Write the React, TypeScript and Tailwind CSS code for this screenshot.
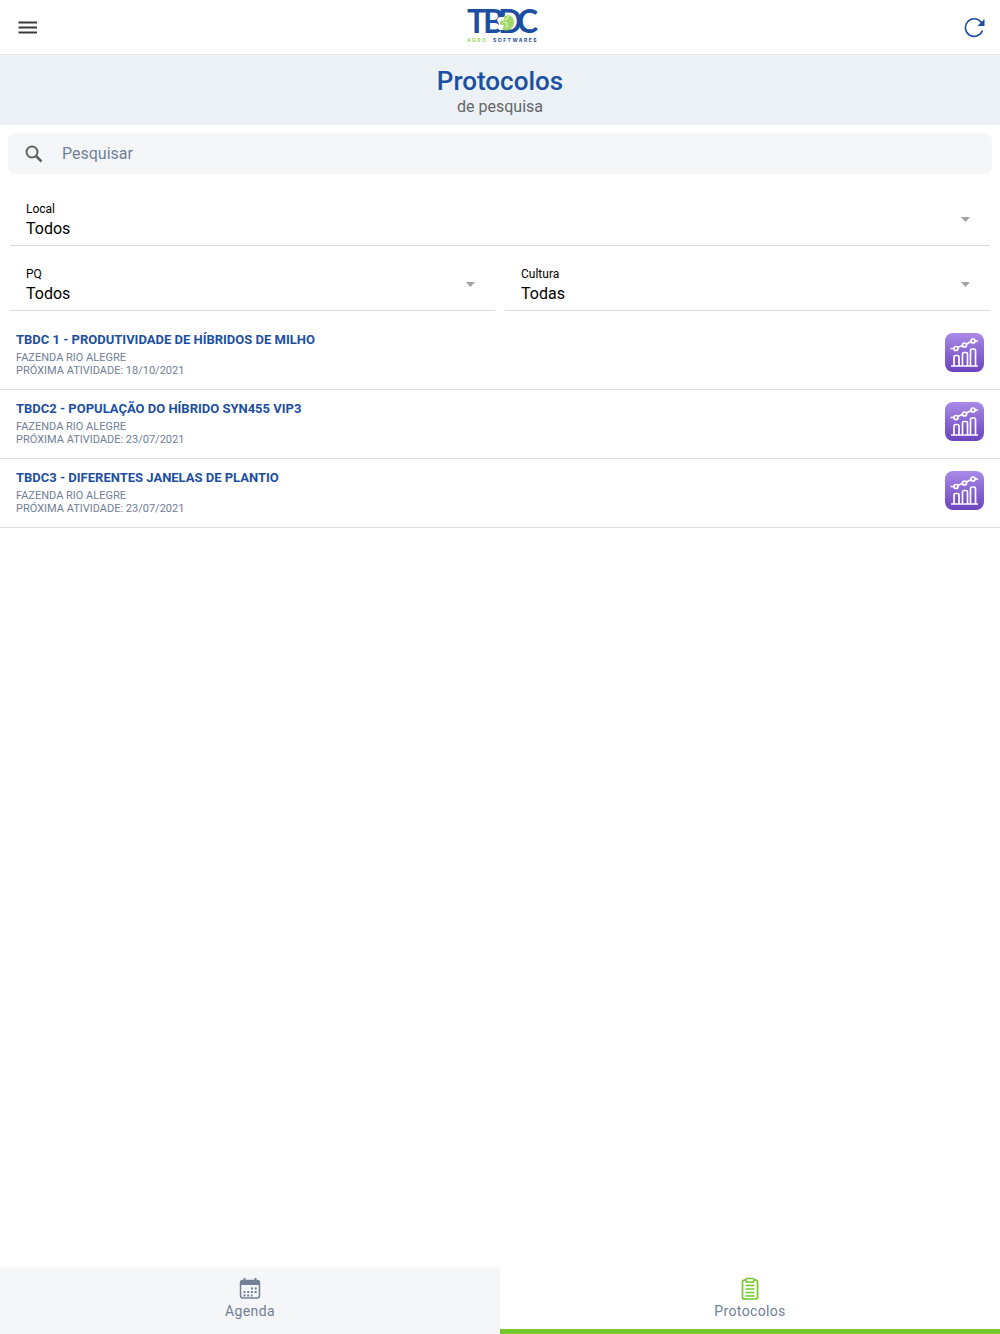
import React, { useState } from 'react';

interface Protocol {
  id: number;
  title: string;
  farm: string;
  nextActivity: string;
}

interface SelectFieldProps {
  id: string;
  label: string;
  options: string[];
}

const PROTOCOLS: Protocol[] = [
  { id: 1, title: 'TBDC 1 - PRODUTIVIDADE DE HÍBRIDOS DE MILHO', farm: 'FAZENDA RIO ALEGRE', nextActivity: '18/10/2021' },
  { id: 2, title: 'TBDC2 - POPULAÇÃO DO HÍBRIDO SYN455 VIP3', farm: 'FAZENDA RIO ALEGRE', nextActivity: '23/07/2021' },
  { id: 3, title: 'TBDC3 - DIFERENTES JANELAS DE PLANTIO', farm: 'FAZENDA RIO ALEGRE', nextActivity: '23/07/2021' },
];

const Logo: React.FC = () => (
  <svg className="h-11 w-[76px] overflow-visible" viewBox="0 0 76 44" role="img" aria-label="TBDC Agro Softwares">
    <text x="3 19 34 53" y="28" fill="#1c4fa1" fontFamily="Lato, sans-serif" fontWeight="700" fontSize="32">TBDC</text>
    {/* Globe inside the D */}
    <path d="M35 12h7l4 1 2 4v4l-3 3-4 1h-6l-2-3 2-3-2-4Z" fill="#fff" />
    <path d="M41 10c5-1 9 2 9 7s-4 8.500-8.500 8.500c-2 0-3-1-3-2l2-3-4-1-1-3 4-1 1-3-1-1Z" fill="#a1d867" />
    <path d="m41 10 3 1-1 3-2 1M39 17l4 1v3l-1 2" fill="none" stroke="#fff" strokeWidth="0.8" />
    <g fontFamily="Inter, sans-serif" fontWeight="700" fontSize="5" letterSpacing="1.500">
      <text x="3" y="37" fill="#9bd75e">AGRO</text>
      <text x="29" y="37" fill="#1c4fa1">SOFTWARES</text>
    </g>
  </svg>
);

const ChartIcon: React.FC = () => (
  <svg className="h-10 w-10" viewBox="0 0 40 40" fill="none" aria-hidden="true">
    <defs>
      <linearGradient id="chart-bg" x1="0" y1="0" x2="0" y2="1">
        <stop offset="0" stopColor="#a98ae8" />
        <stop offset="1" stopColor="#6c43bd" />
      </linearGradient>
    </defs>
    <rect x="1" y="1" width="39" height="39" rx="8" fill="url(#chart-bg)" />
    <g stroke="#fff" strokeWidth="1.700">
      <path d="M7 34h27M10 34V25q0-1.500 1.500-1.500h2q1.500 0 1.500 1.500v9M18.500 34V22q0-1.500 1.500-1.500h2q1.500 0 1.500 1.500v12M26.500 34V18.500q0-1.500 1.500-1.500h2q1.500 0 1.500 1.500V34" />
      <path d="M6.500 16.500h3.500M13.500 15.500l5-2M22.500 12l4.500-2.500M31 9h3" />
      <circle cx="12" cy="16.500" r="2" />
      <circle cx="20.500" cy="13" r="2" />
      <circle cx="29" cy="9" r="2" />
    </g>
  </svg>
);

const CalendarIcon: React.FC = () => (
  <svg className="h-6 w-6" viewBox="0 0 24 24" fill="none" aria-hidden="true">
    <rect x="2.500" y="3.500" width="19" height="17.500" rx="2.500" stroke="#718096" strokeWidth="1.500" />
    <path d="M2 8V6q0-3 3-3h14q3 0 3 3v2Z" fill="#718096" />
    <path d="M6.500 1V5M17.500 1V5" stroke="#718096" strokeWidth="2" />
    <path d="M13 11.500h6M5.500 15h13.500M5.500 18.500h9" stroke="#718096" strokeWidth="2" strokeDasharray="2 1.700" />
  </svg>
);

const ClipboardIcon: React.FC = () => (
  <svg className="h-6 w-6" viewBox="0 0 24 24" fill="none" stroke="#76c82e" strokeWidth="1.700" aria-hidden="true">
    <path d="M8 3H6.500Q4.500 3 4.500 5v15q0 2 2 2h11q2 0 2-2V5q0-2-2-2H16" />
    <path d="M8 4V2.500q0-1 1-1h6q1 0 1 1V4q0 1-1 1H9q-1 0-1-1Z" />
    <path d="M7.500 8.500h9M7.500 12h9M7.500 15.500h9M7.500 19h9" />
  </svg>
);

const SelectField: React.FC<SelectFieldProps> = ({ id, label, options }) => (
  <div className="flex min-w-0 flex-1 items-center border-b border-[#dcdcdc] pr-5 pl-4">
    <div className="flex flex-1 flex-col pt-[9px] pb-1">
      <label htmlFor={id} className="text-xs leading-4">{label}</label>
      <select id={id} className="h-6 w-full appearance-none bg-transparent text-base leading-6 outline-none">
        {options.map(option => <option key={option}>{option}</option>)}
      </select>
    </div>
    <svg className="pointer-events-none h-[6px] w-[9px]" viewBox="0 0 9 6" aria-hidden="true">
      <path d="M0 1h9L4.500 6Z" fill="#a3a3a3" />
    </svg>
  </div>
);

const App: React.FC = () => {
  const [search, setSearch] = useState('');
  const visible = PROTOCOLS.filter(p => p.title.toLowerCase().includes(search.toLowerCase()));

  return (
    <div className="flex min-h-screen flex-col bg-white font-['Roboto',sans-serif] text-black">
      {/* Top bar */}
      <header className="flex h-[55px] items-center justify-between border-b border-[#e4e8eb] pr-3 pl-4">
        <button type="button" aria-label="Menu" className="flex w-6 justify-center">
          <svg className="h-6 w-6" viewBox="0 0 24 24" aria-hidden="true">
            <path d="M2.500 7.500h18.500M2.500 12.500h18.500M2.500 17.500h18.500" stroke="#3c3a3c" strokeWidth="2" />
          </svg>
        </button>
        <Logo />
        <button type="button" aria-label="Atualizar" className="flex w-6 justify-center">
          <svg className="h-6 w-6" viewBox="0 0 24 24" fill="none" aria-hidden="true">
            <path d="M18.500 15.500A8.800 8.800 0 1 1 17 7l1.500 2" stroke="#1c4fa1" strokeWidth="1.600" />
            <path d="M20.500 4v7h-7Z" fill="#1c4fa1" />
          </svg>
        </button>
      </header>

      {/* Page title */}
      <div className="flex flex-col items-center bg-[#ecf1f6] pt-[10px] pb-2">
        <h1 className="text-[26px] leading-8 font-medium text-[#1c4fa1]">Protocolos</h1>
        <p className="text-base leading-5 text-[#666666]">de pesquisa</p>
      </div>

      <main className="flex-1">
        <label className="m-2 flex h-[41px] items-center gap-[18px] rounded-lg bg-[#f5f6f8] px-4">
          <svg className="h-5 w-5 shrink-0" viewBox="0 0 20 20" fill="none" stroke="#606060" aria-hidden="true">
            <circle cx="8" cy="8" r="5.500" strokeWidth="2" />
            <path d="m12 12 5.500 5.500" strokeWidth="2.500" />
          </svg>
          <input
            type="text"
            aria-label="Pesquisar"
            placeholder="Pesquisar"
            value={search}
            onChange={e => setSearch(e.target.value)}
            className="min-w-0 flex-1 bg-transparent text-base leading-6 outline-none placeholder:text-[#718096]"
          />
        </label>

        {/* Filters */}
        <div className="flex flex-col gap-[11px] px-[10px] pt-[10px]">
          <SelectField id="local" label="Local" options={['Todos', 'Fazenda Rio Alegre']} />
          <div className="flex gap-[10px]">
            <SelectField id="pq" label="PQ" options={['Todos']} />
            <SelectField id="cultura" label="Cultura" options={['Todas', 'Milho']} />
          </div>
        </div>

        <ul className="mt-[10px]">
          {visible.map(protocol => (
            <li key={protocol.id} className="flex items-start justify-between border-b border-[#dedede] px-4 pt-[11px] pb-3">
              <div>
                <h2 className="pb-[3px] text-[13px] leading-4 font-bold text-[#1c4fa1]">{protocol.title}</h2>
                <p className="text-[11px] leading-[13px] text-[#718096]">{protocol.farm}</p>
                <p className="text-[11px] leading-[13px] text-[#718096]">PRÓXIMA ATIVIDADE: {protocol.nextActivity}</p>
              </div>
              <button type="button" aria-label="Ver gráfico"><ChartIcon /></button>
            </li>
          ))}
        </ul>
      </main>

      {/* Bottom tabs */}
      <nav className="sticky bottom-0 grid h-[67px] grid-cols-2 text-sm leading-5 tracking-wide text-[#718096]">
        <a href="#agenda" className="flex flex-col items-center bg-[#f5f6f8] pt-[10px]">
          <CalendarIcon />
          Agenda
        </a>
        <a href="#protocolos" aria-current="page" className="flex flex-col items-center border-b-[5px] border-[#76c82e] bg-white pt-[10px]">
          <ClipboardIcon />
          Protocolos
        </a>
      </nav>
    </div>
  );
};

export default App;
